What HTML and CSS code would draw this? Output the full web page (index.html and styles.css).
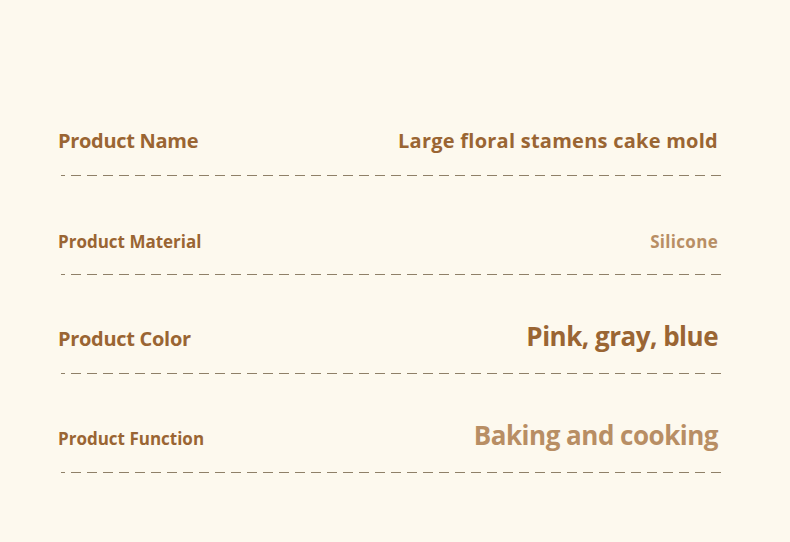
FILE: index.html
```html
<!DOCTYPE html>
<html lang="en">
<head>
<meta charset="utf-8">
<title>Product Specs</title>
<link rel="stylesheet" href="styles.css">
</head>
<body>
<div class="sheet">
  <div class="spec">
    <div class="row">
      <span class="label label-lg">Product Name</span>
      <span class="value value-md">Large floral stamens cake mold</span>
    </div>
    <div class="rule"></div>
  </div>
  <div class="spec">
    <div class="row">
      <span class="label label-sm">Product Material</span>
      <span class="value value-sm light">Silicone</span>
    </div>
    <div class="rule"></div>
  </div>
  <div class="spec">
    <div class="row">
      <span class="label label-lg">Product Color</span>
      <span class="value value-lg">Pink, gray, blue</span>
    </div>
    <div class="rule"></div>
  </div>
  <div class="spec">
    <div class="row">
      <span class="label label-sm">Product Function</span>
      <span class="value value-lg light">Baking and cooking</span>
    </div>
    <div class="rule"></div>
  </div>
</div>
</body>
</html>
```

FILE: styles.css
```css
html, body {
  margin: 0;
  padding: 0;
}
body {
  background: #fdf9ee;
  width: 790px;
  height: 542px;
  overflow: hidden;
  font-family: "Open Sans", "Liberation Sans", sans-serif;
  font-weight: 700;
  color: #9a6533;
}
.sheet {
  padding: 77px 0 0 58px;
  width: 664px;
}
.spec {
  height: 99px;
  display: flex;
  flex-direction: column;
  justify-content: flex-end;
}
.row {
  display: flex;
  justify-content: space-between;
  align-items: baseline;
  line-height: 1;
  padding-right: 4px;
  margin-bottom: 24px;
}
.label-lg { font-size: 20px; letter-spacing: -0.3px; }
.label-sm { font-size: 17px; letter-spacing: 0; }
.value-md { font-size: 20px; letter-spacing: 0.25px; }
.value-sm { font-size: 17px; letter-spacing: 0.3px; }
.value-lg { font-size: 26px; letter-spacing: -0.5px; }
.light { color: #b88e64; }
.rule {
  height: 1px;
  margin-left: 3px;
  width: 660px;
  background-image: linear-gradient(to right, #8f8068 10px, transparent 10px);
  background-size: 16px 1px;
  background-position: 10px 0;
  background-repeat: repeat-x;
}
```
